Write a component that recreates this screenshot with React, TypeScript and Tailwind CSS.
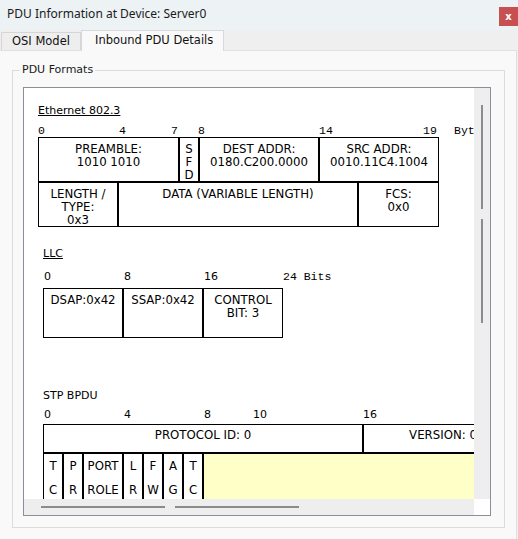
import React from "react";

// fonts used all over the dialog
const sans = "font-['DejaVu_Sans',sans-serif]";
const mono = "font-['Liberation_Mono',monospace]";

type CellProps = { className: string; children?: React.ReactNode };

// one field of a pdu table, every cell draws its own 1px border so inner lines come out 2px
const Cell = ({ className, children }: CellProps) => (
  <div className={`shrink-0 border border-black text-center text-[11.75px] text-black ${className}`}>{children}</div>
);

const Ethernet = () => (
  <div className="ml-[14px] pt-[16px]">
    <div className="leading-[13px] underline">Ethernet 802.3</div>
    <div className={`${mono} mt-[7px] flex h-[13px] text-[11.5px] leading-[13px] whitespace-nowrap`}>
      <span className="w-[81px] shrink-0">0</span>
      <span className="w-[52px] shrink-0">4</span>
      <span className="w-[27px] shrink-0">7</span>
      <span className="w-[121px] shrink-0">8</span>
      <span className="w-[104px] shrink-0">14</span>
      <span className="w-[31px] shrink-0">19</span>
      <span>Bytes</span>
    </div>
    <div className="flex leading-[13px]">
      <Cell className="w-[141px] h-[45px] pt-[5px]">PREAMBLE:<br />1010 1010</Cell>
      <Cell className="w-[20px] h-[45px] pt-[5px]">S<br />F<br />D</Cell>
      <Cell className="w-[120px] h-[45px] pt-[5px]">DEST ADDR:<br />0180.C200.0000</Cell>
      <Cell className="w-[120px] h-[45px] pt-[5px]">SRC ADDR:<br />0010.11C4.1004</Cell>
    </div>
    <div className="flex leading-[13px]">
      <Cell className="w-[80px] h-[45px] pt-[5px]">LENGTH /<br />TYPE:<br />0x3</Cell>
      <Cell className="w-[240px] h-[45px] pt-[5px]">DATA (VARIABLE LENGTH)</Cell>
      <Cell className="w-[81px] h-[45px] pt-[5px]">FCS:<br />0x0</Cell>
    </div>
  </div>
);

const Llc = () => (
  <div className="ml-[19px] mt-[20px]">
    <div className="leading-[13px] underline">LLC</div>
    <div className="mt-[10px] flex h-[13px] items-baseline pl-[1px] leading-[13px] whitespace-nowrap">
      <span className="w-[80px] shrink-0">0</span>
      <span className="w-[80px] shrink-0">8</span>
      <span className="w-[79px] shrink-0">16</span>
      <span className={`${mono} text-[11.5px]`}>24 Bits</span>
    </div>
    <div className="mt-[5px] flex leading-[13px]">
      <Cell className="w-[80px] h-[50px] pt-[5px]">DSAP:0x42</Cell>
      <Cell className="w-[80px] h-[50px] pt-[5px]">SSAP:0x42</Cell>
      <Cell className="w-[80px] h-[50px] pt-[5px]">CONTROL<br />BIT: 3</Cell>
    </div>
  </div>
);

const flags = [
  ["T", "C", "w-[20px]"],
  ["P", "R", "w-[20px]"],
  ["PORT", "ROLE", "w-[40px]"],
  ["L", "R", "w-[20px]"],
  ["F", "W", "w-[20px]"],
  ["A", "G", "w-[20px]"],
  ["T", "C", "w-[20px]"],
];

const Stp = () => (
  <div className="ml-[19px] mt-[51px]">
    <div className="leading-[13px]">STP BPDU</div>
    <div className="mt-[6px] flex h-[13px] pl-[1px] leading-[13px] whitespace-nowrap">
      <span className="w-[80px] shrink-0">0</span>
      <span className="w-[80px] shrink-0">4</span>
      <span className="w-[49px] shrink-0">8</span>
      <span className="w-[110px] shrink-0">10</span>
      <span>16</span>
    </div>
    <div className="mt-[3px] flex leading-[13px] whitespace-nowrap">
      <Cell className="w-[320px] h-[29px] pt-[4px]">PROTOCOL ID: 0</Cell>
      <Cell className="w-[160px] h-[29px] pt-[4px]">VERSION: 0</Cell>
    </div>
    <div className="flex leading-[24px]">
      {flags.map(([a, b, w], i) => (
        <Cell key={i} className={`${w} h-[60px]`}>{a}<br />{b}</Cell>
      ))}
      <Cell className="w-[300px] h-[60px] bg-[#ffffc8]" />
    </div>
  </div>
);

export default function App() {
  return (
    <div className="flex h-[539px] w-[518px] flex-col overflow-hidden bg-[#efefef]">
      {/* title bar */}
      <div className="flex h-[30px] shrink-0 items-start justify-between bg-[#edf2f5]">
        <div className="pl-[7px] pt-[6px] font-['Noto_Sans',sans-serif] text-[12px] leading-[16px] text-[#1b1b1b]">
          PDU Information at Device: Server0
        </div>
        <div className={`${sans} mt-[7px] flex h-[19px] w-[19px] items-center justify-center bg-[#c75050] text-[10px] font-bold leading-none text-white`}>
          x
        </div>
      </div>

      {/* tabs */}
      <div className={`${sans} flex h-[20px] shrink-0 items-end pl-[1px] text-[11.5px] leading-[14px] text-[#111]`}>
        <div className="h-[18px] w-[80px] border border-b-0 border-[#d6d6d6] bg-[#eeeeee] pl-[10px] pt-[1px]">OSI Model</div>
        <div className="relative z-10 -mb-px h-[21px] w-[143px] border border-b-0 border-[#d9d9d9] bg-[#f9f9f9] pl-[13px] pt-[2px]">
          Inbound PDU Details
        </div>
      </div>

      {/* page */}
      <div className={`${sans} w-[517px] flex-1 border-t border-r border-[#e0e0e0] bg-[#f9f9f9] text-[11px] text-black`}>
        <div className="relative ml-[12px] mt-[19px] h-[458px] w-[493px] border border-[#dcdcdc] pl-[10px] pt-[16px]">
          <span className="absolute -top-[8px] left-[7px] bg-[#f9f9f9] px-[2px] leading-[13px] text-[#1a1a1a]">PDU Formats</span>

          <div className="grid h-[429px] w-[468px] grid-cols-[450px_16px] grid-rows-[411px_16px] border border-[#8a8f98]">
            <div className="overflow-hidden bg-white">
              <div className="w-[600px]">
                <Ethernet />
                <Llc />
                <Stp />
              </div>
            </div>
            <div className="bg-[#eeeeee] pl-[7px] pt-[17px]">
              <div className="h-[104px] w-[2px] bg-[#8c8c8c]" />
              <div className="mt-[10px] h-[104px] w-[2px] bg-[#8c8c8c]" />
            </div>
            <div className="flex gap-[10px] bg-[#eeeeee] pl-[17px] pt-[7px]">
              <div className="h-[2px] w-[124px] bg-[#8c8c8c]" />
              <div className="h-[2px] w-[124px] bg-[#8c8c8c]" />
            </div>
            <div className="bg-white" />
          </div>
        </div>
      </div>
    </div>
  );
}
